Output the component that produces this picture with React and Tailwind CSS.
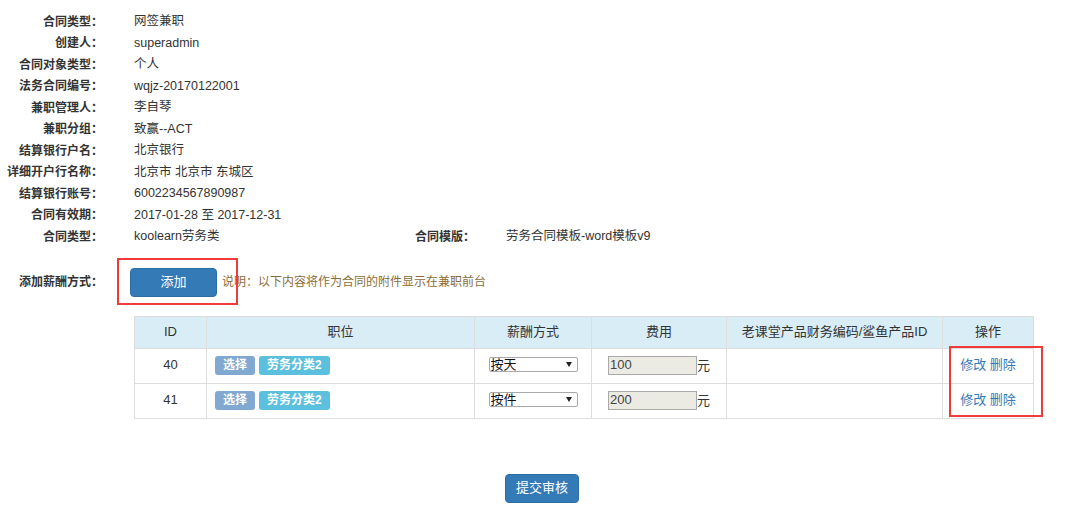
import React from "react";

const info = [
  ["合同类型：", "网签兼职"],
  ["创建人：", "superadmin"],
  ["合同对象类型：", "个人"],
  ["法务合同编号：", "wqjz-20170122001"],
  ["兼职管理人：", "李自琴"],
  ["兼职分组：", "致赢--ACT"],
  ["结算银行户名：", "北京银行"],
  ["详细开户行名称：", "北京市 北京市 东城区"],
  ["结算银行账号：", "6002234567890987"],
  ["合同有效期：", "2017-01-28 至 2017-12-31"],
];

const rows = [
  { id: 40, pay: "按天", fee: "100" },
  { id: 41, pay: "按件", fee: "200" },
];

const label = "w-[103px] shrink-0 text-right font-bold text-[12px]";
const value = "ml-[31px] text-[12.5px]";
const th = "border border-[#dddddd] h-[32px] font-normal text-center align-middle";
const td = "border border-[#dddddd] h-[35px] align-top pt-[6px] text-center";

function PayRow({ row }) {
  return (
    <tr>
      <td className={td}>{row.id}</td>
      <td className={`${td} text-left pl-[8px]`}>
        <div className="flex gap-[4px] mt-[1px]">
          <span className="h-[19px] px-[8px] rounded-[3px] bg-[#80a8d0] text-white text-[12px] font-bold leading-[19px]">
            选择
          </span>
          <span className="h-[19px] px-[8px] rounded-[3px] bg-[#5bc0de] text-white text-[12px] font-bold leading-[19px]">
            劳务分类2
          </span>
        </div>
      </td>
      <td className={td}>
        <div className="relative mx-auto mt-[2px] w-[89px]">
          <select
            defaultValue={row.pay}
            className="block w-[89px] h-[15px] appearance-none border border-[#a9a9a9] rounded-[2px] bg-white pl-[1px] text-[13px] leading-[13px] text-[#111] outline-none"
          >
            <option>按天</option>
            <option>按件</option>
          </select>
          <span className="pointer-events-none absolute right-[6px] top-[5px] w-0 h-0 border-l-[3px] border-r-[3px] border-t-[5px] border-l-transparent border-r-transparent border-t-[#222]" />
        </div>
      </td>
      <td className={td}>
        <div className="flex justify-center items-center mt-[1px]">
          <input
            disabled
            value={row.fee}
            readOnly
            className="w-[89px] h-[19px] border border-[#a9a9a9] bg-[#ebebe4] px-[1px] text-[13px] text-[#444]"
          />
          <span className="text-[13px] leading-[19px]">元</span>
        </div>
      </td>
      <td className={td}></td>
      <td className={td}>
        <a className="text-[#337ab7]">修改</a> <a className="text-[#337ab7]">删除</a>
      </td>
    </tr>
  );
}

export default function App() {
  return (
    <div
      className="relative min-h-[527px] bg-white text-[#333] pt-[11px]"
      style={{ fontFamily: '"Liberation Sans", "Noto Sans CJK SC", sans-serif' }}
    >
      <div>
        {info.map(([k, v]) => (
          <div key={k} className="flex h-[21.5px] items-center">
            <div className={label}>{k}</div>
            <div className={value}>{v}</div>
          </div>
        ))}
        <div className="flex h-[21.5px] items-center">
          <div className={label}>合同类型：</div>
          <div className={`${value} w-[238px]`}>koolearn劳务类</div>
          <div className={label}>合同模版：</div>
          <div className="ml-[31px] text-[12.5px]">劳务合同模板-word模板v9</div>
        </div>
      </div>

      <div className="flex items-center mt-[20px]">
        <div className={label}>添加薪酬方式：</div>
        <button className="ml-[27px] w-[87px] h-[29px] rounded-[4px] bg-[#337ab7] border border-[#2e6da4] text-white text-[13px]">
          添加
        </button>
        <span className="ml-[5px] text-[12px] text-[#8a6d3b]">说明：以下内容将作为合同的附件显示在兼职前台</span>
      </div>

      <table className="ml-[134px] mt-[19px] w-[899px] table-fixed border-collapse text-[13px]">
        <colgroup>
          <col className="w-[72px]" />
          <col className="w-[268px]" />
          <col className="w-[117px]" />
          <col className="w-[135px]" />
          <col className="w-[216px]" />
          <col className="w-[91px]" />
        </colgroup>
        <thead>
          <tr className="bg-[#d9edf7]">
            <th className={th}>ID</th>
            <th className={th}>职位</th>
            <th className={th}>薪酬方式</th>
            <th className={th}>费用</th>
            <th className={th}>老课堂产品财务编码/鲨鱼产品ID</th>
            <th className={th}>操作</th>
          </tr>
        </thead>
        <tbody>
          {rows.map((r) => (
            <PayRow key={r.id} row={r} />
          ))}
        </tbody>
      </table>

      <div className="mt-[55px] pl-[505px]">
        <button className="w-[74px] h-[29px] rounded-[4px] bg-[#337ab7] border border-[#2e6da4] text-white text-[13px]">
          提交审核
        </button>
      </div>

      {/* red annotation boxes */}
      <div className="pointer-events-none absolute left-[117px] top-[258px] w-[121px] h-[47px] border-2 border-[#f33a3a]" />
      <div className="pointer-events-none absolute left-[949px] top-[346px] w-[94px] h-[71px] border-2 border-[#f33a3a]" />
    </div>
  );
}
